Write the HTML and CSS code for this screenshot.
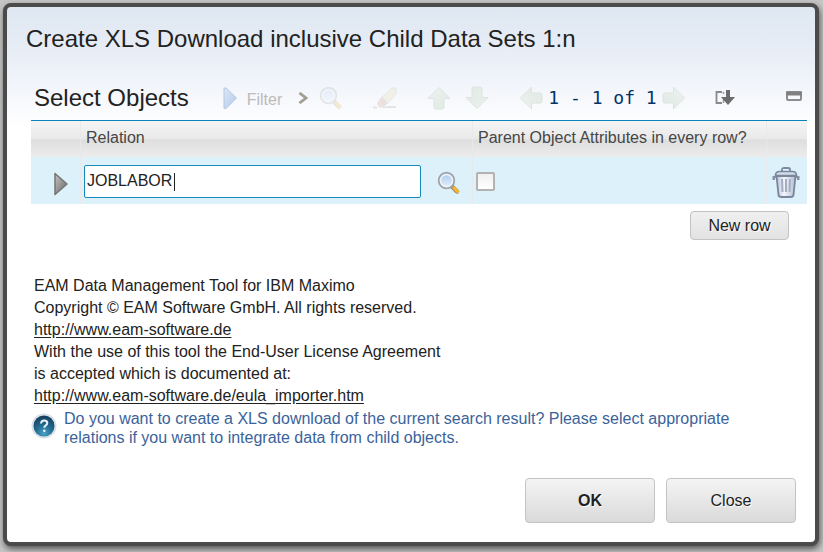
FILE: index.html
```html
<!DOCTYPE html>
<html lang="en">
<head>
<meta charset="utf-8">
<title>Create XLS Download</title>
<link rel="stylesheet" href="styles.css">
</head>
<body>
<svg class="defs" aria-hidden="true">
  <defs>
    <linearGradient id="pale" x1="0" y1="0" x2="1" y2="1"><stop offset="0" stop-color="#eef2f0"/><stop offset="1" stop-color="#dfe9e2"/></linearGradient>
    <linearGradient id="blue" x1="0" y1="0" x2="1" y2="1"><stop offset="0" stop-color="#dce9f7"/><stop offset="1" stop-color="#b2c8e8"/></linearGradient>
    <linearGradient id="gray" x1="0" y1="0" x2="1" y2="1"><stop offset="0" stop-color="#c4c4c4"/><stop offset="1" stop-color="#666"/></linearGradient>
    <linearGradient id="lens" x1="0" y1="0" x2="0" y2="1"><stop offset="0" stop-color="#a9c8ee"/><stop offset="1" stop-color="#e8f2fd"/></linearGradient>
    <linearGradient id="can" x1="0" y1="0" x2="1" y2="0"><stop offset="0" stop-color="#b9c3d6"/><stop offset=".4" stop-color="#f2f5fa"/><stop offset="1" stop-color="#b4bed1"/></linearGradient>
    <radialGradient id="orb" cx=".5" cy=".85" r=".8"><stop offset="0" stop-color="#48a3c5"/><stop offset=".5" stop-color="#226b90"/><stop offset="1" stop-color="#17405f"/></radialGradient>
    <symbol id="arrow" viewBox="0 0 24 24"><path d="M12 1.500 23 12.500H17V21Q17 23 15 23H9Q7 23 7 21V12.500H1Z" fill="url(#pale)" stroke="#dbe5df" stroke-linejoin="round"/></symbol>
    <symbol id="magnifier" viewBox="0 0 24 24">
      <path d="m15 15.500 5 5" stroke="#a98a62" stroke-width="4.500" stroke-linecap="round"/>
      <path d="m17 17 3.500 3.500" stroke="#f4b72e" stroke-width="3" stroke-linecap="round"/>
      <circle cx="9.500" cy="9.500" r="7.800" fill="url(#lens)" stroke="#a0a3a8" stroke-width="1.800"/>
      <circle cx="9.500" cy="9.500" r="6" fill="none" stroke="#eef2f7" stroke-width="1.500"/>
    </symbol>
  </defs>
</svg>
<main class="dialog" role="dialog" aria-labelledby="dialog-title">
  <h1 id="dialog-title">Create XLS Download inclusive Child Data Sets 1:n</h1>
  <section class="objects">
    <header class="toolbar">
      <h2>Select Objects</h2>
      <button class="filter" type="button" disabled>
        <svg width="15" height="22" viewBox="0 0 15 22"><path d="M1 1h2l10.500 10L3 21.500H1Z" fill="url(#blue)" stroke="#b2c6e5" stroke-linejoin="round"/></svg>
        <span>Filter</span>
      </button>
      <svg class="chevron" width="10" height="12" viewBox="0 0 10 12"><path d="m1.500 1 6.500 5-6.500 5" fill="none" stroke="#a19e91" stroke-width="2.800"/></svg>
      <div class="tools">
        <button class="icon" type="button" aria-label="Find" disabled><svg class="faded" width="24" height="24"><use href="#magnifier"/></svg></button>
        <button class="icon" type="button" aria-label="Clear" disabled>
          <svg class="faded" width="24" height="24" viewBox="0 0 24 24"><path d="M9 11 19 2h4v6l-9 10Z" fill="#e8d9a0" stroke="#a8b994"/><path d="m9 11 5.500 6-4 4H6l-1.500-4Z" fill="#cf877c" stroke="#aaa"/><path d="M0 20.500h4v2H0Zm9 1 6-1.500h8v2H9Z" fill="#999"/></svg>
        </button>
      </div>
      <div class="tools tight">
        <button class="icon" type="button" aria-label="Previous row" disabled><svg width="24" height="24"><use href="#arrow"/></svg></button>
        <button class="icon" type="button" aria-label="Next row" disabled><svg class="down" width="24" height="24"><use href="#arrow"/></svg></button>
      </div>
      <div class="pager">
        <button class="icon" type="button" aria-label="Previous page" disabled><svg class="left" width="24" height="24"><use href="#arrow"/></svg></button>
        <span>1 - 1 of 1</span>
        <button class="icon" type="button" aria-label="Next page" disabled><svg class="right" width="24" height="24"><use href="#arrow"/></svg></button>
      </div>
      <button class="icon download" type="button" aria-label="Download">
        <svg width="20" height="16" viewBox="0 0 20 16"><path d="M7 2H1.500v11H7" fill="none" stroke="#8a8a8a" stroke-width="1.800"/><path d="M8.500 2v2m0 5v4" stroke="#999" stroke-width="1.500"/><path d="M11 0h4v7h5l-7 8-7-8h5Z" fill="#6c6c6c"/></svg>
      </button>
      <button class="icon collapse" type="button" aria-label="Collapse">
        <svg width="16" height="10" viewBox="0 0 16 10"><rect x="1" y="1" width="14" height="8" rx="1" fill="#f7f8fb" stroke="#8d8d8d" stroke-width="2"/><path d="M0 2.500h16" stroke="#808080" stroke-width="4"/></svg>
      </button>
    </header>
    <table>
      <colgroup><col class="col-mark"><col class="col-relation"><col><col class="col-delete"></colgroup>
      <thead>
        <tr><th></th><th scope="col"><label for="relation">Relation</label></th><th scope="col"><label for="parent">Parent Object Attributes in every row?</label></th><th></th></tr>
      </thead>
      <tbody>
        <tr>
          <td class="mark"><button class="icon" type="button" aria-label="Show details"><svg width="16" height="24" viewBox="0 0 16 24"><path d="M2 1.500 14 12 2 22.500Z" fill="url(#gray)" stroke="#747474" stroke-width="1.500" stroke-linejoin="round"/></svg></button></td>
          <td><div class="lookup"><input id="relation" type="text" value="JOBLABOR"><button class="icon" type="button" aria-label="Select value"><svg width="24" height="24"><use href="#magnifier"/></svg></button></div></td>
          <td><input id="parent" type="checkbox"></td>
          <td class="delete"><button class="icon" type="button" aria-label="Delete row">
            <svg width="28" height="32" viewBox="0 0 28 32"><path d="M10 4V2.500Q10 1 12 1h4q2 0 2 1.500V4" fill="none" stroke="#7d899f" stroke-width="1.800"/><path d="M3 12H1.500v-2H4m21 2h1.500v-2H24" fill="none" stroke="#8792a7" stroke-width="2"/><path d="m4.500 9 2 19q.3 2 3 2h9q2.700 0 3-2l2-19Z" fill="url(#can)" stroke="#7a869d" stroke-width="1.800"/><path d="M10 12l.5 13m3.500-13v13m4-13-.5 13" stroke="#a3aec2" stroke-width="2"/><path d="M3.500 8.500q0-4 4-4h13q4 0 4 4Z" fill="#d4dbe7" stroke="#7a869d" stroke-width="1.600"/></svg>
          </button></td>
        </tr>
      </tbody>
    </table>
    <div class="row-actions"><button class="button small" type="button">New row</button></div>
  </section>
  <p class="legal">EAM Data Management Tool for IBM Maximo<br>Copyright © EAM Software GmbH. All rights reserved.<br><a href="http://www.eam-software.de">http://www.eam-software.de</a><br>With the use of this tool the End-User License Agreement<br>is accepted which is documented at:<br><a href="http://www.eam-software.de/eula_importer.htm">http://www.eam-software.de/eula_importer.htm</a></p>
  <div class="question">
    <svg width="26" height="26" viewBox="0 0 26 26"><circle cx="13" cy="13" r="12.500" fill="#d9e1e6"/><circle cx="13" cy="13" r="10.500" fill="url(#orb)"/><path d="M10 10.500q.3-3 3.200-3 3.100 0 3.100 2.500 0 1.400-1.500 2.300-1.500.9-1.500 2.500" fill="none" stroke="#e8f3f8" stroke-width="2"/><circle cx="13.300" cy="17.800" r="1.300" fill="#e8f3f8"/></svg>
    <p>Do you want to create a XLS download of the current search result? Please select appropriate relations if you want to integrate data from child objects.</p>
  </div>
  <footer class="actions"><button class="button primary" type="button">OK</button><button class="button" type="button">Close</button></footer>
</main>
</body>
</html>
```
FILE: styles.css
```css
* { box-sizing: border-box; }
body {
  margin: 0;
  padding: 3px 4px 6px 3px;
  background: #c6c6c6;
  color: #222;
  font: 16px/22px "Liberation Sans", Arial, sans-serif;
}
.defs { position: absolute; width: 0; height: 0; }
svg { display: block; }
h1, h2, p { margin: 0; }
button, input { font: inherit; color: inherit; }
.dialog {
  padding: 16px 8px 19px 24px;
  border: 4px solid #4b4b4b;
  border-radius: 8px;
  background: #fff linear-gradient(#dee7f1, #e9eef7 50px, #fff 120px) no-repeat;
  box-shadow: 1px 3px 6px #555;
}
h1, h2 { font-size: 24px; line-height: 32px; font-weight: 400; }
h1 { margin-left: -5px; }
.toolbar {
  display: flex;
  align-items: center;
  height: 49px;
  margin-top: 17px;
  padding: 4px 5px 0 3px;
  border-bottom: 1px solid #0a84b8;
}
.icon { flex: none; padding: 0; border: 0; background: none; }
.filter {
  display: flex;
  align-items: center;
  gap: 9px;
  margin-left: 34px;
  padding: 0;
  border: 0;
  background: none;
  color: #bbb;
}
.filter span { padding-top: 4px; }
.chevron { margin: 0 11px 0 16px; }
.tools { display: flex; gap: 30px; }
.tight { gap: 14px; margin-left: 30px; }
.faded { opacity: .22; }
.down { transform: rotate(180deg); }
.left { transform: rotate(-90deg); }
.right { transform: rotate(90deg); }
.pager {
  display: flex;
  align-items: center;
  gap: 5px;
  margin-left: 30px;
  color: #00356b;
  font: 18px/24px "DejaVu Sans Mono", monospace;
  white-space: nowrap;
}
.download { margin-left: 29px; }
.collapse { margin-left: auto; padding-bottom: 4px; }
table {
  width: 100%;
  table-layout: fixed;
  border-collapse: separate;
  border-spacing: 0;
}
.col-mark { width: 49px; }
.col-relation { width: 392px; }
.col-delete { width: 41px; }
th {
  height: 36px;
  padding: 0 5px 2px;
  color: #464646;
  font-weight: 400;
  text-align: left;
  white-space: nowrap;
  background: linear-gradient(#f5f5f5, #e9e9e9 50%, #dedede 52%, #ececec);
}
td { height: 47px; padding: 1px 3px 0; background: #dcf1f9; }
th + th, td + td { border-left: 1px solid #e9e9ec; }
.mark .icon { display: block; margin: 6px 0 0 19px; }
.lookup { display: flex; align-items: center; gap: 16px; }
.lookup input {
  width: 337px;
  height: 33px;
  padding: 0 2px;
  border: 1px solid #168bb9;
  border-radius: 2px;
  outline: 0;
  /* insertion mark after the value */
  background: #fff linear-gradient(#222, #222) 89px 7px / 1px 18px no-repeat;
}
.lookup .icon { padding-top: 4px; }
input[type="checkbox"] {
  appearance: none;
  display: block;
  width: 19px;
  height: 19px;
  margin: 0;
  border: 2px solid #b2b2b2;
  border-radius: 2px;
  background: linear-gradient(#f0f0f0, #fff);
}
.delete .icon { display: block; padding-top: 3px; margin-left: 2px; }
.row-actions { display: flex; justify-content: flex-end; padding: 7px 18px 0 0; }
.button {
  width: 130px;
  height: 45px;
  padding: 0;
  border: 1px solid #c3c3c3;
  border-radius: 4px;
  background: linear-gradient(#f4f4f4, #dadada);
  text-shadow: 1px 1px 1px #fff;
}
.small { width: 99px; height: 29px; background: linear-gradient(#f0f0f0, #e2e2e2); }
.primary { font-weight: 700; }
.legal { margin: 35px 0 0 3px; }
.legal a { color: inherit; text-underline-offset: 2px; }
.question {
  display: flex;
  gap: 7px;
  padding: 2px 35px 0 0;
  color: #3a639b;
  line-height: 19px;
}
.question svg { flex: none; margin-top: 4px; }
.actions { display: flex; justify-content: flex-end; gap: 11px; padding: 31px 11px 0 0; }
```
